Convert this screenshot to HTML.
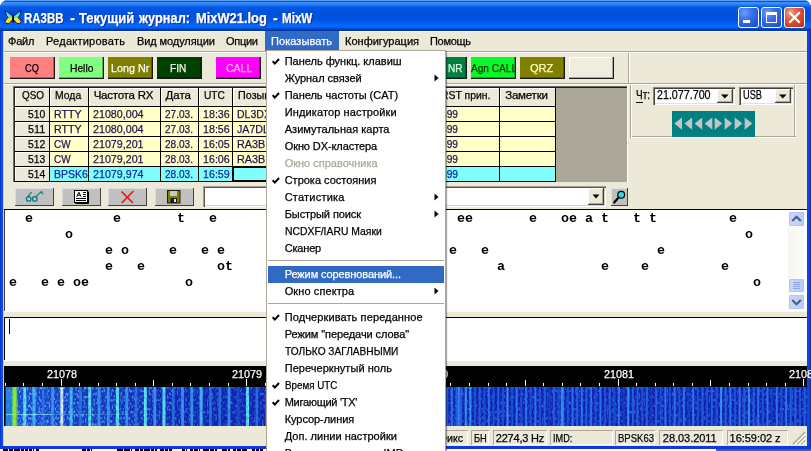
<!DOCTYPE html>
<html lang="ru"><head><meta charset="utf-8"><title>MixW</title>
<style>
html,body{margin:0;padding:0;}
body{width:811px;height:451px;overflow:hidden;background:#fff;position:relative;font-family:"Liberation Sans",sans-serif;font-size:11px;}
.t{position:absolute;white-space:pre;font-family:"Liberation Sans",sans-serif;-webkit-text-stroke:0.25px;}
.m{position:absolute;white-space:pre;font-family:"Liberation Mono",monospace;font-weight:700;font-size:13.333px;line-height:16px;color:#000;letter-spacing:0;}
.abs{position:absolute;}
</style></head><body><div id="w" style="position:absolute;left:0;top:0;width:811px;height:451px;overflow:hidden;will-change:transform;">

<div style="position:absolute;left:0px;top:0px;width:811px;height:449px;background:linear-gradient(to right,#0c34d4 0,#0c34d4 1px,#0a50e4 1px,#0a50e4 3px,#bcd4f8 3px,#bcd4f8 4px,#0a46e0 4px,#0a46e0 810px,#0828b8 810px);border-radius:8px 8px 0 0;"></div>
<div style="position:absolute;left:0px;top:446px;width:811px;height:3px;background:#0a3cdc;"></div>
<div style="position:absolute;left:0px;top:0px;width:811px;height:31px;border-radius:8px 8px 0 0;background:linear-gradient(to bottom,#5c9cf4 0.5px,#1050c8 1.5px,#3c8cf8 2.5px,#3a8af8 3.5px,#2a7ef4 4.5px,#1a70ee 5.5px,#0c64e8 6.5px,#045ce4 7.5px,#0056e2 8.5px,#0052de 12.5px,#0054e2 19.5px,#025ae8 21.5px,#0462f4 23.5px,#0868fc 25.5px,#0868fc 26.5px,#0560f4 27.5px,#0250dc 28.5px,#0040b8 29.5px,#0034a0 30.5px);"></div>
<div style="position:absolute;left:4px;top:31px;width:803px;height:415px;background:#ECE9D8;"></div>
<div style="position:absolute;left:4px;top:31px;width:803px;height:1px;background:#f6f7fb;"></div>
<div style="position:absolute;left:0px;top:449px;width:811px;height:2px;background:#fff;"></div>
<div style="position:absolute;left:716px;top:449px;width:95px;height:2px;background:#2a5fd0;"></div>
<div style="position:absolute;left:2.7px;top:449px;width:5px;height:2px;background:#000;"></div>
<div style="position:absolute;left:8.7px;top:449px;width:4px;height:2px;background:#000;"></div>
<div style="position:absolute;left:13.7px;top:449px;width:6px;height:2px;background:#000;"></div>
<div style="position:absolute;left:20.7px;top:449px;width:3px;height:2px;background:#000;"></div>
<div style="position:absolute;left:24.7px;top:449px;width:3px;height:2px;background:#000;"></div>
<div style="position:absolute;left:28.7px;top:449px;width:3px;height:2px;background:#000;"></div>
<div style="position:absolute;left:32.7px;top:449px;width:0.3px;height:2px;background:#000;"></div>
<div style="position:absolute;left:36px;top:449px;width:3px;height:2px;background:#000;"></div>
<div style="position:absolute;left:81.5px;top:449px;width:4px;height:2px;background:#000;"></div>
<div style="position:absolute;left:86.5px;top:449px;width:3px;height:2px;background:#000;"></div>
<div style="position:absolute;left:90.5px;top:449px;width:1.0px;height:2px;background:#000;"></div>
<div style="position:absolute;left:116.5px;top:449px;width:6px;height:2px;background:#000;"></div>
<div style="position:absolute;left:123.5px;top:449px;width:6px;height:2px;background:#000;"></div>
<div style="position:absolute;left:130.5px;top:449px;width:1.0px;height:2px;background:#000;"></div>
<div style="position:absolute;left:135px;top:449px;width:4px;height:2px;background:#000;"></div>
<div style="position:absolute;left:140px;top:449px;width:3px;height:2px;background:#000;"></div>
<div style="position:absolute;left:144px;top:449px;width:6px;height:2px;background:#000;"></div>
<div style="position:absolute;left:151px;top:449px;width:3px;height:2px;background:#000;"></div>
<div style="position:absolute;left:155px;top:449px;width:1.5px;height:2px;background:#000;"></div>
<div style="position:absolute;left:160px;top:449px;width:4px;height:2px;background:#000;"></div>
<div style="position:absolute;left:165px;top:449px;width:3px;height:2px;background:#000;"></div>
<div style="position:absolute;left:169px;top:449px;width:2.5px;height:2px;background:#000;"></div>
<div style="position:absolute;left:181.5px;top:449px;width:3px;height:2px;background:#000;"></div>
<div style="position:absolute;left:185.5px;top:449px;width:1.0px;height:2px;background:#000;"></div>
<div style="position:absolute;left:190px;top:449px;width:3px;height:2px;background:#000;"></div>
<div style="position:absolute;left:194px;top:449px;width:4px;height:2px;background:#000;"></div>
<div style="position:absolute;left:199px;top:449px;width:1px;height:2px;background:#000;"></div>
<div style="position:absolute;left:203px;top:449px;width:6px;height:2px;background:#000;"></div>
<div style="position:absolute;left:210px;top:449px;width:4px;height:2px;background:#000;"></div>
<div style="position:absolute;left:215px;top:449px;width:1.5px;height:2px;background:#000;"></div>
<div style="position:absolute;left:221.5px;top:449px;width:5px;height:2px;background:#000;"></div>
<div style="position:absolute;left:227.5px;top:449px;width:2.5px;height:2px;background:#000;"></div>
<div style="position:absolute;left:233px;top:449px;width:3px;height:2px;background:#000;"></div>
<div style="position:absolute;left:237px;top:449px;width:4px;height:2px;background:#000;"></div>
<div style="position:absolute;left:242px;top:449px;width:4.5px;height:2px;background:#000;"></div>
<div style="position:absolute;left:251.5px;top:449px;width:3px;height:2px;background:#000;"></div>
<div style="position:absolute;left:255.5px;top:449px;width:3px;height:2px;background:#000;"></div>
<div style="position:absolute;left:259.5px;top:449px;width:3px;height:2px;background:#000;"></div>
<svg class="abs" style="left:0;top:0" width="30" height="30" viewBox="0 0 30 30">
<defs><linearGradient id="bw" x1="0" y1="0" x2="0" y2="1"><stop offset="0" stop-color="#38e8f8"/><stop offset=".42" stop-color="#48f0f0"/><stop offset=".52" stop-color="#70d880"/><stop offset=".62" stop-color="#f8e828"/><stop offset="1" stop-color="#ffe018"/></linearGradient></defs>
<path d="M5.2 10.3 L12.6 16.2 L12.6 19.5 L9.2 23.6 L6.3 23.6 L5 21.2 L8 17.6 L6.4 15.2 Z" fill="url(#bw)" stroke="#0a1458" stroke-width="0.9" stroke-linejoin="round"/>
<path d="M21 10.3 L13.6 16.2 L13.6 19.5 L17 23.6 L19.9 23.6 L21.2 21.2 L18.2 17.6 L19.8 15.2 Z" fill="url(#bw)" stroke="#0a1458" stroke-width="0.9" stroke-linejoin="round"/>
<path d="M13.1 15.6 L13.1 22.4" stroke="#080808" stroke-width="1.7"/>
<path d="M13 15.5 L11.6 11.6 M13.3 15.5 L14.8 11.2" stroke="#10208a" stroke-width="0.9" stroke-dasharray="1 1"/>
</svg>
<div class="t " style="left:24.30px;top:9.15px;font-size:14px;line-height:18px;color:#fff;font-weight:700;transform:scaleX(0.8192);transform-origin:0 0;text-shadow:1px 1px 0 rgba(10,30,120,.8);">RA3BB</div>
<div class="t " style="left:70.30px;top:9.15px;font-size:14px;line-height:18px;color:#fff;font-weight:700;text-shadow:1px 1px 0 rgba(10,30,120,.8);">-</div>
<div class="t " style="left:79.20px;top:9.15px;font-size:14px;line-height:18px;color:#fff;font-weight:700;transform:scaleX(0.9287);transform-origin:0 0;text-shadow:1px 1px 0 rgba(10,30,120,.8);">Текущий</div>
<div class="t " style="left:139.40px;top:9.15px;font-size:14px;line-height:18px;color:#fff;font-weight:700;transform:scaleX(0.9133);transform-origin:0 0;text-shadow:1px 1px 0 rgba(10,30,120,.8);">журнал:</div>
<div class="t " style="left:196.10px;top:9.15px;font-size:14px;line-height:18px;color:#fff;font-weight:700;transform:scaleX(0.9197);transform-origin:0 0;text-shadow:1px 1px 0 rgba(10,30,120,.8);">MixW21.log</div>
<div class="t " style="left:273.00px;top:9.15px;font-size:14px;line-height:18px;color:#fff;font-weight:700;text-shadow:1px 1px 0 rgba(10,30,120,.8);">-</div>
<div class="t " style="left:281.70px;top:9.15px;font-size:14px;line-height:18px;color:#fff;font-weight:700;transform:scaleX(0.8291);transform-origin:0 0;text-shadow:1px 1px 0 rgba(10,30,120,.8);">MixW</div>
<div style="position:absolute;left:738px;top:7px;width:19px;height:19px;background:radial-gradient(circle at 30% 25%,#6f9dff 0%,#3a73ea 35%,#2458d8 75%,#1c48c0 100%);border:1px solid #fff;border-radius:3px;"></div>
<div style="position:absolute;left:761px;top:7px;width:19px;height:19px;background:radial-gradient(circle at 30% 25%,#6f9dff 0%,#3a73ea 35%,#2458d8 75%,#1c48c0 100%);border:1px solid #fff;border-radius:3px;"></div>
<div style="position:absolute;left:784px;top:7px;width:19px;height:19px;background:radial-gradient(circle at 30% 25%,#f0a088 0%,#e0603c 35%,#c8381c 80%,#b02810 100%);border:1px solid #fff;border-radius:3px;"></div>
<div style="position:absolute;left:743px;top:20px;width:7px;height:3px;background:#fff;"></div>
<div style="position:absolute;left:766px;top:12px;width:9px;height:9px;border:1px solid #fff;border-top:3px solid #fff;box-sizing:border-box;width:11px;height:11px;"></div>
<svg class="abs" style="left:788px;top:11px" width="13" height="13" viewBox="0 0 13 13"><path d="M2 2 L11 11 M11 2 L2 11" stroke="#fff" stroke-width="2.2" stroke-linecap="square"/></svg>
<div style="position:absolute;left:265px;top:31px;width:74px;height:20px;background:#316ac5;"></div>
<div class="t " style="left:8.00px;top:33.59px;font-size:11px;line-height:14px;color:#000;letter-spacing:-0.182px;">Файл</div>
<div class="t " style="left:46.00px;top:33.59px;font-size:11px;line-height:14px;color:#000;letter-spacing:0.247px;">Редактировать</div>
<div class="t " style="left:137.00px;top:33.59px;font-size:11px;line-height:14px;color:#000;letter-spacing:-0.089px;">Вид модуляции</div>
<div class="t " style="left:226.00px;top:33.59px;font-size:11px;line-height:14px;color:#000;letter-spacing:-0.273px;">Опции</div>
<div class="t " style="left:271.00px;top:33.59px;font-size:11px;line-height:14px;color:#fff;letter-spacing:0.066px;">Показывать</div>
<div class="t " style="left:345.00px;top:33.59px;font-size:11px;line-height:14px;color:#000;letter-spacing:0.016px;">Конфигурация</div>
<div class="t " style="left:430.00px;top:33.59px;font-size:11px;line-height:14px;color:#000;letter-spacing:-0.300px;">Помощь</div>
<div style="position:absolute;left:4px;top:51px;width:803px;height:1px;background:#aca899;"></div>
<div style="position:absolute;left:4px;top:52px;width:803px;height:1px;background:#fff;"></div>
<div style="position:absolute;left:10px;top:57px;width:45px;height:22px;background:#ff8080;box-shadow:inset -1px -1px 0 #181818, inset -2px -2px 0 rgba(0,0,0,.30);overflow:hidden;"></div>
<div style="position:absolute;left:10px;top:57px;width:44px;height:21px;overflow:hidden;">
<div class="t " style="left:14.70px;top:4.02px;font-size:11.5px;line-height:14px;color:#000;transform:scaleX(0.8000);transform-origin:0 0;">CQ</div>
</div>
<div style="position:absolute;left:59px;top:57px;width:45px;height:22px;background:#80ff80;box-shadow:inset -1px -1px 0 #181818, inset -2px -2px 0 rgba(0,0,0,.30);overflow:hidden;"></div>
<div style="position:absolute;left:59px;top:57px;width:44px;height:21px;overflow:hidden;">
<div class="t " style="left:10.80px;top:4.02px;font-size:11.5px;line-height:14px;color:#000;transform:scaleX(0.8925);transform-origin:0 0;">Hello</div>
</div>
<div style="position:absolute;left:108px;top:57px;width:45px;height:22px;background:#808000;box-shadow:inset -1px -1px 0 #181818, inset -2px -2px 0 rgba(0,0,0,.30);overflow:hidden;"></div>
<div style="position:absolute;left:108px;top:57px;width:44px;height:21px;overflow:hidden;">
<div class="t " style="left:3.00px;top:4.02px;font-size:11.5px;line-height:14px;color:#fff;transform:scaleX(0.9342);transform-origin:0 0;">Long Nr</div>
</div>
<div style="position:absolute;left:157px;top:57px;width:45px;height:22px;background:#004000;box-shadow:inset -1px -1px 0 #181818, inset -2px -2px 0 rgba(0,0,0,.30);overflow:hidden;"></div>
<div style="position:absolute;left:157px;top:57px;width:44px;height:21px;overflow:hidden;">
<div class="t " style="left:13.30px;top:4.02px;font-size:11.5px;line-height:14px;color:#e8ffe8;transform:scaleX(0.8742);transform-origin:0 0;">FIN</div>
</div>
<div style="position:absolute;left:216px;top:57px;width:45px;height:22px;background:#ff00ff;box-shadow:inset -1px -1px 0 #181818, inset -2px -2px 0 rgba(0,0,0,.30);overflow:hidden;"></div>
<div style="position:absolute;left:216px;top:57px;width:44px;height:21px;overflow:hidden;">
<div class="t " style="left:9.80px;top:4.02px;font-size:11.5px;line-height:14px;color:#ffb8e0;transform:scaleX(0.9143);transform-origin:0 0;">CALL</div>
</div>
<div style="position:absolute;left:267px;top:57px;width:45px;height:22px;background:#ff00ff;box-shadow:inset -1px -1px 0 #181818, inset -2px -2px 0 rgba(0,0,0,.30);overflow:hidden;"></div>
<div style="position:absolute;left:314px;top:57px;width:45px;height:22px;background:#008040;box-shadow:inset -1px -1px 0 #181818, inset -2px -2px 0 rgba(0,0,0,.30);overflow:hidden;"></div>
<div style="position:absolute;left:363px;top:57px;width:45px;height:22px;background:#008040;box-shadow:inset -1px -1px 0 #181818, inset -2px -2px 0 rgba(0,0,0,.30);overflow:hidden;"></div>
<div style="position:absolute;left:422px;top:57px;width:45px;height:22px;background:#008040;box-shadow:inset -1px -1px 0 #181818, inset -2px -2px 0 rgba(0,0,0,.30);overflow:hidden;"></div>
<div style="position:absolute;left:422px;top:57px;width:44px;height:21px;overflow:hidden;">
<div class="t " style="left:26.20px;top:4.02px;font-size:11.5px;line-height:14px;color:#e0ffe0;transform:scaleX(0.8722);transform-origin:0 0;">NR</div>
</div>
<div style="position:absolute;left:471px;top:57px;width:45px;height:22px;background:#08f828;box-shadow:inset -1px -1px 0 #181818, inset -2px -2px 0 rgba(0,0,0,.30);overflow:hidden;"></div>
<div style="position:absolute;left:471px;top:57px;width:44px;height:21px;overflow:hidden;">
<div class="t " style="left:0.30px;top:4.02px;font-size:11.5px;line-height:14px;color:#003800;transform:scaleX(0.8778);transform-origin:0 0;">Agn CALL</div>
</div>
<div style="position:absolute;left:520px;top:57px;width:45px;height:22px;background:#808000;box-shadow:inset -1px -1px 0 #181818, inset -2px -2px 0 rgba(0,0,0,.30);overflow:hidden;"></div>
<div style="position:absolute;left:520px;top:57px;width:44px;height:21px;overflow:hidden;">
<div class="t " style="left:10.20px;top:4.02px;font-size:11.5px;line-height:14px;color:#ffffc0;transform:scaleX(0.9637);transform-origin:0 0;">QRZ</div>
</div>
<div style="position:absolute;left:569px;top:57px;width:45px;height:22px;background:#f0ede0;box-shadow:inset -1px -1px 0 #181818, inset -2px -2px 0 rgba(0,0,0,.30), inset 1px 1px 0 #fff;overflow:hidden;"></div>
<div style="position:absolute;left:628px;top:53px;width:1px;height:30px;background:#aca899;"></div>
<div style="position:absolute;left:629px;top:53px;width:1px;height:30px;background:#fff;"></div>
<div style="position:absolute;left:4px;top:83px;width:803px;height:1px;background:#aca899;"></div>
<div style="position:absolute;left:4px;top:84px;width:803px;height:1px;background:#fff;"></div>
<div style="position:absolute;left:13px;top:86px;width:614px;height:96px;background:#aca899;box-shadow:inset 1px 1px 0 #716f64, inset 2px 2px 0 #202020;"></div>
<div style="position:absolute;left:627px;top:86px;width:1px;height:96px;background:#fff;"></div>
<div style="position:absolute;left:15px;top:88px;width:541px;height:94px;background:#000;"></div>
<div style="position:absolute;left:15px;top:88px;width:34px;height:18px;background:#ECE9D8;box-shadow:inset 1px 1px 0 #fff;"></div>
<div class="t " style="left:22.20px;top:88.02px;font-size:11.5px;line-height:14px;color:#000;transform:scaleX(0.8612);transform-origin:0 0;">QSO</div>
<div style="position:absolute;left:50px;top:88px;width:38px;height:18px;background:#ECE9D8;box-shadow:inset 1px 1px 0 #fff;"></div>
<div class="t " style="left:54.70px;top:88.02px;font-size:11.5px;line-height:14px;color:#000;transform:scaleX(0.9054);transform-origin:0 0;">Мода</div>
<div style="position:absolute;left:89px;top:88px;width:71px;height:18px;background:#ECE9D8;box-shadow:inset 1px 1px 0 #fff;"></div>
<div class="t " style="left:93.70px;top:88.02px;font-size:11.5px;line-height:14px;color:#000;letter-spacing:-0.233px;">Частота RX</div>
<div style="position:absolute;left:161px;top:88px;width:37px;height:18px;background:#ECE9D8;box-shadow:inset 1px 1px 0 #fff;"></div>
<div class="t " style="left:165.60px;top:88.02px;font-size:11.5px;line-height:14px;color:#000;letter-spacing:-0.051px;">Дата</div>
<div style="position:absolute;left:199px;top:88px;width:33px;height:18px;background:#ECE9D8;box-shadow:inset 1px 1px 0 #fff;"></div>
<div class="t " style="left:203.60px;top:88.02px;font-size:11.5px;line-height:14px;color:#000;transform:scaleX(0.8877);transform-origin:0 0;">UTC</div>
<div style="position:absolute;left:233px;top:88px;width:67px;height:18px;background:#ECE9D8;box-shadow:inset 1px 1px 0 #fff;"></div>
<div class="t " style="left:237.60px;top:88.02px;font-size:11.5px;line-height:14px;color:#000;transform:scaleX(0.9376);transform-origin:0 0;">Позывной</div>
<div style="position:absolute;left:301px;top:88px;width:59px;height:18px;background:#ECE9D8;box-shadow:inset 1px 1px 0 #fff;"></div>
<div class="t " style="left:315.00px;top:88.02px;font-size:11.5px;line-height:14px;color:#000;letter-spacing:-0.203px;">Имя</div>
<div style="position:absolute;left:361px;top:88px;width:75px;height:18px;background:#ECE9D8;box-shadow:inset 1px 1px 0 #fff;"></div>
<div class="t " style="left:375.00px;top:88.02px;font-size:11.5px;line-height:14px;color:#000;transform:scaleX(0.9335);transform-origin:0 0;">RST пер.</div>
<div style="position:absolute;left:437px;top:88px;width:62px;height:18px;background:#ECE9D8;box-shadow:inset 1px 1px 0 #fff;"></div>
<div class="t " style="left:441.00px;top:88.02px;font-size:11.5px;line-height:14px;color:#000;transform:scaleX(0.9051);transform-origin:0 0;">RST прин.</div>
<div style="position:absolute;left:500px;top:88px;width:55px;height:18px;background:#ECE9D8;box-shadow:inset 1px 1px 0 #fff;"></div>
<div class="t " style="left:505.20px;top:88.02px;font-size:11.5px;line-height:14px;color:#000;letter-spacing:-0.214px;">Заметки</div>
<div style="position:absolute;left:15px;top:107px;width:34px;height:14px;background:#ECE9D8;overflow:hidden;box-shadow:inset 1px 1px 0 #fff;">
<div class="t " style="left:12.70px;top:0.32px;font-size:11.5px;line-height:14px;color:#000;transform:scaleX(0.9024);transform-origin:0 0;">510</div>
</div>
<div style="position:absolute;left:50px;top:107px;width:38px;height:14px;background:#ffffc8;overflow:hidden;">
<div class="t " style="left:3.70px;top:0.32px;font-size:11.5px;line-height:14px;color:#24104f;transform:scaleX(0.9248);transform-origin:0 0;">RTTY</div>
</div>
<div style="position:absolute;left:89px;top:107px;width:71px;height:14px;background:#ffffc8;overflow:hidden;">
<div class="t " style="left:3.70px;top:0.32px;font-size:11.5px;line-height:14px;color:#24104f;transform:scaleX(0.9298);transform-origin:0 0;">21080,004</div>
</div>
<div style="position:absolute;left:161px;top:107px;width:37px;height:14px;background:#ffffc8;overflow:hidden;">
<div class="t " style="left:3.70px;top:0.32px;font-size:11.5px;line-height:14px;color:#24104f;transform:scaleX(0.8767);transform-origin:0 0;">27.03.</div>
</div>
<div style="position:absolute;left:199px;top:107px;width:33px;height:14px;background:#ffffc8;overflow:hidden;">
<div class="t " style="left:3.70px;top:0.32px;font-size:11.5px;line-height:14px;color:#24104f;transform:scaleX(0.9287);transform-origin:0 0;">18:36</div>
</div>
<div style="position:absolute;left:233px;top:107px;width:67px;height:14px;background:#ffffc8;overflow:hidden;">
<div class="t " style="left:3.70px;top:0.32px;font-size:11.5px;line-height:14px;color:#24104f;transform:scaleX(0.9162);transform-origin:0 0;">DL3DXX</div>
</div>
<div style="position:absolute;left:301px;top:107px;width:59px;height:14px;background:#ffffc8;overflow:hidden;">
</div>
<div style="position:absolute;left:361px;top:107px;width:75px;height:14px;background:#ffffc8;overflow:hidden;">
<div class="t " style="left:3.70px;top:0.32px;font-size:11.5px;line-height:14px;color:#24104f;transform:scaleX(0.8867);transform-origin:0 0;">599</div>
</div>
<div style="position:absolute;left:437px;top:107px;width:62px;height:14px;background:#ffffc8;overflow:hidden;">
<div class="t " style="left:3.70px;top:0.32px;font-size:11.5px;line-height:14px;color:#24104f;transform:scaleX(0.8867);transform-origin:0 0;">599</div>
</div>
<div style="position:absolute;left:500px;top:107px;width:55px;height:14px;background:#ffffc8;overflow:hidden;">
</div>
<div style="position:absolute;left:15px;top:122px;width:34px;height:14px;background:#ECE9D8;overflow:hidden;box-shadow:inset 1px 1px 0 #fff;">
<div class="t " style="left:12.70px;top:0.32px;font-size:11.5px;line-height:14px;color:#000;transform:scaleX(0.9447);transform-origin:0 0;">511</div>
</div>
<div style="position:absolute;left:50px;top:122px;width:38px;height:14px;background:#ffffc8;overflow:hidden;">
<div class="t " style="left:3.70px;top:0.32px;font-size:11.5px;line-height:14px;color:#24104f;transform:scaleX(0.9248);transform-origin:0 0;">RTTY</div>
</div>
<div style="position:absolute;left:89px;top:122px;width:71px;height:14px;background:#ffffc8;overflow:hidden;">
<div class="t " style="left:3.70px;top:0.32px;font-size:11.5px;line-height:14px;color:#24104f;transform:scaleX(0.9298);transform-origin:0 0;">21080,004</div>
</div>
<div style="position:absolute;left:161px;top:122px;width:37px;height:14px;background:#ffffc8;overflow:hidden;">
<div class="t " style="left:3.70px;top:0.32px;font-size:11.5px;line-height:14px;color:#24104f;transform:scaleX(0.8767);transform-origin:0 0;">27.03.</div>
</div>
<div style="position:absolute;left:199px;top:122px;width:33px;height:14px;background:#ffffc8;overflow:hidden;">
<div class="t " style="left:3.70px;top:0.32px;font-size:11.5px;line-height:14px;color:#24104f;transform:scaleX(0.9287);transform-origin:0 0;">18:56</div>
</div>
<div style="position:absolute;left:233px;top:122px;width:67px;height:14px;background:#ffffc8;overflow:hidden;">
<div class="t " style="left:3.70px;top:0.32px;font-size:11.5px;line-height:14px;color:#24104f;transform:scaleX(0.9244);transform-origin:0 0;">JA7DLE</div>
</div>
<div style="position:absolute;left:301px;top:122px;width:59px;height:14px;background:#ffffc8;overflow:hidden;">
</div>
<div style="position:absolute;left:361px;top:122px;width:75px;height:14px;background:#ffffc8;overflow:hidden;">
<div class="t " style="left:3.70px;top:0.32px;font-size:11.5px;line-height:14px;color:#24104f;transform:scaleX(0.8867);transform-origin:0 0;">599</div>
</div>
<div style="position:absolute;left:437px;top:122px;width:62px;height:14px;background:#ffffc8;overflow:hidden;">
<div class="t " style="left:3.70px;top:0.32px;font-size:11.5px;line-height:14px;color:#24104f;transform:scaleX(0.8867);transform-origin:0 0;">599</div>
</div>
<div style="position:absolute;left:500px;top:122px;width:55px;height:14px;background:#ffffc8;overflow:hidden;">
</div>
<div style="position:absolute;left:15px;top:137px;width:34px;height:14px;background:#ECE9D8;overflow:hidden;box-shadow:inset 1px 1px 0 #fff;">
<div class="t " style="left:12.70px;top:0.32px;font-size:11.5px;line-height:14px;color:#000;transform:scaleX(0.9024);transform-origin:0 0;">512</div>
</div>
<div style="position:absolute;left:50px;top:137px;width:38px;height:14px;background:#ffffc8;overflow:hidden;">
<div class="t " style="left:3.70px;top:0.32px;font-size:11.5px;line-height:14px;color:#24104f;transform:scaleX(0.8606);transform-origin:0 0;">CW</div>
</div>
<div style="position:absolute;left:89px;top:137px;width:71px;height:14px;background:#ffffc8;overflow:hidden;">
<div class="t " style="left:3.70px;top:0.32px;font-size:11.5px;line-height:14px;color:#24104f;transform:scaleX(0.9298);transform-origin:0 0;">21079,201</div>
</div>
<div style="position:absolute;left:161px;top:137px;width:37px;height:14px;background:#ffffc8;overflow:hidden;">
<div class="t " style="left:3.70px;top:0.32px;font-size:11.5px;line-height:14px;color:#24104f;transform:scaleX(0.8767);transform-origin:0 0;">28.03.</div>
</div>
<div style="position:absolute;left:199px;top:137px;width:33px;height:14px;background:#ffffc8;overflow:hidden;">
<div class="t " style="left:3.70px;top:0.32px;font-size:11.5px;line-height:14px;color:#24104f;transform:scaleX(0.9287);transform-origin:0 0;">16:05</div>
</div>
<div style="position:absolute;left:233px;top:137px;width:67px;height:14px;background:#ffffc8;overflow:hidden;">
<div class="t " style="left:3.70px;top:0.32px;font-size:11.5px;line-height:14px;color:#24104f;transform:scaleX(0.9412);transform-origin:0 0;">RA3BB</div>
</div>
<div style="position:absolute;left:301px;top:137px;width:59px;height:14px;background:#ffffc8;overflow:hidden;">
</div>
<div style="position:absolute;left:361px;top:137px;width:75px;height:14px;background:#ffffc8;overflow:hidden;">
<div class="t " style="left:3.70px;top:0.32px;font-size:11.5px;line-height:14px;color:#24104f;transform:scaleX(0.8867);transform-origin:0 0;">599</div>
</div>
<div style="position:absolute;left:437px;top:137px;width:62px;height:14px;background:#ffffc8;overflow:hidden;">
<div class="t " style="left:3.70px;top:0.32px;font-size:11.5px;line-height:14px;color:#24104f;transform:scaleX(0.8867);transform-origin:0 0;">599</div>
</div>
<div style="position:absolute;left:500px;top:137px;width:55px;height:14px;background:#ffffc8;overflow:hidden;">
</div>
<div style="position:absolute;left:15px;top:152px;width:34px;height:14px;background:#ECE9D8;overflow:hidden;box-shadow:inset 1px 1px 0 #fff;">
<div class="t " style="left:12.70px;top:0.32px;font-size:11.5px;line-height:14px;color:#000;transform:scaleX(0.9024);transform-origin:0 0;">513</div>
</div>
<div style="position:absolute;left:50px;top:152px;width:38px;height:14px;background:#ffffc8;overflow:hidden;">
<div class="t " style="left:3.70px;top:0.32px;font-size:11.5px;line-height:14px;color:#24104f;transform:scaleX(0.8606);transform-origin:0 0;">CW</div>
</div>
<div style="position:absolute;left:89px;top:152px;width:71px;height:14px;background:#ffffc8;overflow:hidden;">
<div class="t " style="left:3.70px;top:0.32px;font-size:11.5px;line-height:14px;color:#24104f;transform:scaleX(0.9298);transform-origin:0 0;">21079,201</div>
</div>
<div style="position:absolute;left:161px;top:152px;width:37px;height:14px;background:#ffffc8;overflow:hidden;">
<div class="t " style="left:3.70px;top:0.32px;font-size:11.5px;line-height:14px;color:#24104f;transform:scaleX(0.8767);transform-origin:0 0;">28.03.</div>
</div>
<div style="position:absolute;left:199px;top:152px;width:33px;height:14px;background:#ffffc8;overflow:hidden;">
<div class="t " style="left:3.70px;top:0.32px;font-size:11.5px;line-height:14px;color:#24104f;transform:scaleX(0.9287);transform-origin:0 0;">16:06</div>
</div>
<div style="position:absolute;left:233px;top:152px;width:67px;height:14px;background:#ffffc8;overflow:hidden;">
<div class="t " style="left:3.70px;top:0.32px;font-size:11.5px;line-height:14px;color:#24104f;transform:scaleX(0.9412);transform-origin:0 0;">RA3BB</div>
</div>
<div style="position:absolute;left:301px;top:152px;width:59px;height:14px;background:#ffffc8;overflow:hidden;">
</div>
<div style="position:absolute;left:361px;top:152px;width:75px;height:14px;background:#ffffc8;overflow:hidden;">
<div class="t " style="left:3.70px;top:0.32px;font-size:11.5px;line-height:14px;color:#24104f;transform:scaleX(0.8867);transform-origin:0 0;">599</div>
</div>
<div style="position:absolute;left:437px;top:152px;width:62px;height:14px;background:#ffffc8;overflow:hidden;">
<div class="t " style="left:3.70px;top:0.32px;font-size:11.5px;line-height:14px;color:#24104f;transform:scaleX(0.8867);transform-origin:0 0;">599</div>
</div>
<div style="position:absolute;left:500px;top:152px;width:55px;height:14px;background:#ffffc8;overflow:hidden;">
</div>
<div style="position:absolute;left:15px;top:167px;width:34px;height:14px;background:#ECE9D8;overflow:hidden;box-shadow:inset 1px 1px 0 #fff;">
<div class="t " style="left:12.70px;top:0.32px;font-size:11.5px;line-height:14px;color:#000;transform:scaleX(0.9024);transform-origin:0 0;">514</div>
</div>
<div style="position:absolute;left:50px;top:167px;width:38px;height:14px;background:#80ffff;overflow:hidden;">
<div class="t " style="left:3.70px;top:0.32px;font-size:11.5px;line-height:14px;color:#102a98;transform:scaleX(0.9087);transform-origin:0 0;">BPSK63</div>
</div>
<div style="position:absolute;left:89px;top:167px;width:71px;height:14px;background:#80ffff;overflow:hidden;">
<div class="t " style="left:3.70px;top:0.32px;font-size:11.5px;line-height:14px;color:#102a98;transform:scaleX(0.9298);transform-origin:0 0;">21079,974</div>
</div>
<div style="position:absolute;left:161px;top:167px;width:37px;height:14px;background:#80ffff;overflow:hidden;">
<div class="t " style="left:3.70px;top:0.32px;font-size:11.5px;line-height:14px;color:#102a98;transform:scaleX(0.8767);transform-origin:0 0;">28.03.</div>
</div>
<div style="position:absolute;left:199px;top:167px;width:33px;height:14px;background:#80ffff;overflow:hidden;">
<div class="t " style="left:3.70px;top:0.32px;font-size:11.5px;line-height:14px;color:#102a98;transform:scaleX(0.9287);transform-origin:0 0;">16:59</div>
</div>
<div style="position:absolute;left:233px;top:167px;width:67px;height:14px;background:#80ffff;overflow:hidden;">
</div>
<div style="position:absolute;left:301px;top:167px;width:59px;height:14px;background:#80ffff;overflow:hidden;">
</div>
<div style="position:absolute;left:361px;top:167px;width:75px;height:14px;background:#80ffff;overflow:hidden;">
<div class="t " style="left:3.70px;top:0.32px;font-size:11.5px;line-height:14px;color:#102a98;transform:scaleX(0.8867);transform-origin:0 0;">599</div>
</div>
<div style="position:absolute;left:437px;top:167px;width:62px;height:14px;background:#80ffff;overflow:hidden;">
<div class="t " style="left:3.70px;top:0.32px;font-size:11.5px;line-height:14px;color:#102a98;transform:scaleX(0.8867);transform-origin:0 0;">599</div>
</div>
<div style="position:absolute;left:500px;top:167px;width:55px;height:14px;background:#80ffff;overflow:hidden;">
</div>
<div style="position:absolute;left:232px;top:166px;width:69px;height:16px;border:2px solid #000;box-sizing:border-box;"></div>
<div style="position:absolute;left:15px;top:188px;width:39px;height:18px;background:#c0c0c0;box-shadow:inset -1px -1px 0 #404040, inset 1px 1px 0 #dcdcdc;"></div>
<div style="position:absolute;left:62px;top:188px;width:39px;height:18px;background:#c0c0c0;box-shadow:inset -1px -1px 0 #404040, inset 1px 1px 0 #dcdcdc;"></div>
<div style="position:absolute;left:108px;top:188px;width:39px;height:18px;background:#c0c0c0;box-shadow:inset -1px -1px 0 #404040, inset 1px 1px 0 #dcdcdc;"></div>
<div style="position:absolute;left:155px;top:188px;width:39px;height:18px;background:#c0c0c0;box-shadow:inset -1px -1px 0 #404040, inset 1px 1px 0 #dcdcdc;"></div>
<svg class="abs" style="left:20px;top:188px" width="30" height="18" viewBox="20 188 30 18">
<circle cx="28.7" cy="198.9" r="2.3" fill="none" stroke="#007878" stroke-width="1.2"/>
<circle cx="34.8" cy="198.9" r="2.3" fill="none" stroke="#007878" stroke-width="1.2"/>
<path d="M27.6 196.6 L31.6 192.2 M35.8 196.6 L41.4 191.6 L43 194.2" fill="none" stroke="#007878" stroke-width="1.1"/>
</svg>
<svg class="abs" style="left:73px;top:189px" width="17" height="16" viewBox="0 0 17 16">
<rect x="1.5" y="1.5" width="13" height="12" fill="#fff" stroke="#000"/>
<path d="M2.5 14.5 H15.5 V2.5" stroke="#000" stroke-width="1" fill="none"/>
<path d="M3 9.5 H13 M3 11.5 H13 M10 3.5 H13 M10 5.5 H13 M10 7.5 H13" stroke="#000" stroke-width="1" fill="none"/>
<path d="M3.6 7.8 L5.9 3.2 L8.2 7.8 M4.6 6.2 H7.2" stroke="#000" stroke-width="1" fill="none"/>
</svg>
<svg class="abs" style="left:120px;top:190px" width="15" height="14" viewBox="0 0 15 14"><path d="M2 2 L12.5 12.5 M13 1.5 L2.2 12.5" stroke="#e81818" stroke-width="1.7" stroke-linecap="round"/></svg>
<svg class="abs" style="left:167px;top:190px" width="14" height="14" viewBox="0 0 14 14">
<rect x="0.5" y="0.5" width="12.5" height="12.5" fill="#808000" stroke="#202000"/>
<rect x="3" y="1" width="7" height="5" fill="#c8c8c8"/>
<rect x="3.5" y="8" width="6.5" height="5" fill="#181818"/><rect x="7" y="9" width="2" height="3" fill="#e8e8e8"/>
</svg>
<div style="position:absolute;left:203px;top:186px;width:403px;height:21px;background:#fff;box-shadow:inset 1px 1px 0 #a5a294, inset 2px 2px 0 #5a584e, inset -1px -1px 0 #fff, inset -2px -2px 0 #d4d0c8;"></div>
<div style="position:absolute;left:588px;top:188px;width:16px;height:17px;background:#ECE9D8;box-shadow:inset -1px -1px 0 #404040, inset 1px 1px 0 #fff, inset -2px -2px 0 #aca899;"></div>
<svg class="abs" style="left:592px;top:194px" width="8" height="5"><path d="M0.5 0.5 H7.5 L4 4.5 Z" fill="#000"/></svg>
<div style="position:absolute;left:611px;top:188px;width:17px;height:18px;background:#c0c0c0;box-shadow:inset -1px -1px 0 #404040, inset 1px 1px 0 #e0e0e0;"></div>
<svg class="abs" style="left:611px;top:188px" width="17" height="18" viewBox="611 188 17 18"><circle cx="621.2" cy="194.8" r="3.4" fill="#30dce4" stroke="#000" stroke-width="1.2"/><path d="M618.6 197.6 L614.2 202.6" stroke="#000" stroke-width="2.2" stroke-linecap="round"/></svg>
<div style="position:absolute;left:630px;top:85px;width:166px;height:53px;box-shadow:inset 1px 0 0 #aca899, inset 2px 0 0 #fff, inset 0 -1px 0 #fff, inset 0 -2px 0 #aca899, inset -1px 0 0 #fff, inset -2px 0 0 #aca899;"></div>
<div class="t " style="left:635.70px;top:88.34px;font-size:12px;line-height:15px;color:#000;transform:scaleX(0.8319);transform-origin:0 0;">Чт:</div>
<div style="position:absolute;left:636px;top:102px;width:7px;height:1px;background:#000;"></div>
<div style="position:absolute;left:653px;top:87px;width:82px;height:18px;background:#fff;box-shadow:inset 1px 1px 0 #8a8878, inset 2px 2px 0 #404040, inset -1px -1px 0 #fff, inset -2px -2px 0 #e4e0d4;"></div>
<div style="position:absolute;left:717px;top:89px;width:16px;height:14px;background:#ECE9D8;box-shadow:inset -1px -1px 0 #404040, inset 1px 1px 0 #fff, inset -2px -2px 0 #aca899;"></div>
<svg class="abs" style="left:721px;top:94px" width="8" height="5"><path d="M0 0.5 H7.6 L3.8 4.5 Z" fill="#000"/></svg>
<div class="t " style="left:656.60px;top:88.34px;font-size:12px;line-height:15px;color:#000;transform:scaleX(0.8912);transform-origin:0 0;">21.077.700</div>
<div style="position:absolute;left:739px;top:87px;width:54px;height:18px;background:#fff;box-shadow:inset 1px 1px 0 #8a8878, inset 2px 2px 0 #404040, inset -1px -1px 0 #fff, inset -2px -2px 0 #e4e0d4;"></div>
<div style="position:absolute;left:775px;top:89px;width:16px;height:14px;background:#ECE9D8;box-shadow:inset -1px -1px 0 #404040, inset 1px 1px 0 #fff, inset -2px -2px 0 #aca899;"></div>
<svg class="abs" style="left:779px;top:94px" width="8" height="5"><path d="M0 0.5 H7.6 L3.8 4.5 Z" fill="#000"/></svg>
<div class="t " style="left:742.60px;top:88.34px;font-size:12px;line-height:15px;color:#000;transform:scaleX(0.7701);transform-origin:0 0;">USB</div>
<div style="position:absolute;left:672px;top:111px;width:83px;height:26px;background:#008080;"></div>
<svg class="abs" style="left:0;top:0" width="811" height="140"><path d="M682.0 117.4 L674.4 123.6 L682.0 129.8 Z" fill="#c4c4c4"/><path d="M692.1 117.4 L684.5 123.6 L692.1 129.8 Z" fill="#c4c4c4"/><path d="M702.2 117.4 L694.6 123.6 L702.2 129.8 Z" fill="#c4c4c4"/><path d="M712.3 117.4 L704.7 123.6 L712.3 129.8 Z" fill="#c4c4c4"/><path d="M714.7 117.4 L722.3 123.6 L714.7 129.8 Z" fill="#c4c4c4"/><path d="M724.7 117.4 L732.3 123.6 L724.7 129.8 Z" fill="#c4c4c4"/><path d="M734.7 117.4 L742.3 123.6 L734.7 129.8 Z" fill="#c4c4c4"/><path d="M744.7 117.4 L752.3 123.6 L744.7 129.8 Z" fill="#c4c4c4"/></svg>
<div style="position:absolute;left:4px;top:209px;width:803px;height:102px;background:#fff;box-shadow:inset 0 1px 0 #000, inset 1px 0 0 #404040;"></div>
<div class="m" style="left:25px;top:211px">e</div>
<div class="m" style="left:113px;top:211px">e</div>
<div class="m" style="left:177px;top:211px">t</div>
<div class="m" style="left:209px;top:211px">e</div>
<div class="m" style="left:457px;top:211px">ee</div>
<div class="m" style="left:529px;top:211px">e</div>
<div class="m" style="left:561px;top:211px">oe</div>
<div class="m" style="left:585px;top:211px">a</div>
<div class="m" style="left:601px;top:211px">t</div>
<div class="m" style="left:633px;top:211px">t</div>
<div class="m" style="left:649px;top:211px">t</div>
<div class="m" style="left:729px;top:211px">e</div>
<div class="m" style="left:65px;top:227px">o</div>
<div class="m" style="left:745px;top:227px">o</div>
<div class="m" style="left:105px;top:243px">e</div>
<div class="m" style="left:121px;top:243px">o</div>
<div class="m" style="left:169px;top:243px">e</div>
<div class="m" style="left:201px;top:243px">e</div>
<div class="m" style="left:217px;top:243px">e</div>
<div class="m" style="left:449px;top:243px">e</div>
<div class="m" style="left:481px;top:243px">e</div>
<div class="m" style="left:657px;top:243px">e</div>
<div class="m" style="left:105px;top:259px">e</div>
<div class="m" style="left:137px;top:259px">e</div>
<div class="m" style="left:217px;top:259px">ot</div>
<div class="m" style="left:497px;top:259px">a</div>
<div class="m" style="left:601px;top:259px">e</div>
<div class="m" style="left:641px;top:259px">e</div>
<div class="m" style="left:721px;top:259px">e</div>
<div class="m" style="left:9px;top:275px">e</div>
<div class="m" style="left:41px;top:275px">e</div>
<div class="m" style="left:57px;top:275px">e</div>
<div class="m" style="left:73px;top:275px">oe</div>
<div class="m" style="left:185px;top:275px">o</div>
<div class="m" style="left:753px;top:275px">o</div>
<div style="position:absolute;left:788px;top:211px;width:17px;height:99px;background:linear-gradient(to right,#f6f5f0,#fdfdfb);"></div>
<div style="position:absolute;left:788px;top:211px;width:17px;height:16px;background:linear-gradient(to right,#cad8fd,#b9cbf8);border:1px solid #fff;box-sizing:border-box;border-radius:2px;box-shadow:inset 0 0 0 1px #b4c4f2;"></div>
<svg class="abs" style="left:788px;top:211px" width="17" height="17"><path d="M4.2 10 L8.5 5.7 L12.8 10" fill="none" stroke="#4d6185" stroke-width="2.2"/></svg>
<div style="position:absolute;left:788px;top:294px;width:17px;height:16px;background:linear-gradient(to right,#cad8fd,#b9cbf8);border:1px solid #fff;box-sizing:border-box;border-radius:2px;box-shadow:inset 0 0 0 1px #b4c4f2;"></div>
<svg class="abs" style="left:788px;top:294px" width="17" height="17"><path d="M4.2 6 L8.5 10.3 L12.8 6" fill="none" stroke="#4d6185" stroke-width="2.2"/></svg>
<div style="position:absolute;left:788px;top:278px;width:17px;height:15px;background:linear-gradient(to right,#cad8fd,#b9cbf8);border:1px solid #fff;box-sizing:border-box;border-radius:2px;box-shadow:inset 0 0 0 1px #b4c4f2;"></div>
<svg class="abs" style="left:788px;top:277px" width="17" height="17"><path d="M5 5.5 H12 M5 7.5 H12 M5 9.5 H12 M5 11.5 H12" stroke="#8ea4e0" stroke-width="1"/></svg>
<div style="position:absolute;left:4px;top:311px;width:803px;height:1px;background:#fbfaf6;"></div>
<div style="position:absolute;left:4px;top:360px;width:803px;height:1px;background:#fff;"></div>
<div style="position:absolute;left:4px;top:317px;width:803px;height:43px;background:#fff;box-shadow:inset 1px 1px 0 #000;"></div>
<div style="position:absolute;left:9px;top:319px;width:1px;height:15px;background:#000;"></div>
<div style="position:absolute;left:4px;top:366px;width:803px;height:21px;background:#000;"></div>
<svg class="abs" style="left:0;top:0" width="811" height="390"><rect x="5" y="383" width="1" height="3" fill="#fff"/><rect x="23" y="383" width="1" height="3" fill="#fff"/><rect x="42" y="383" width="1" height="3" fill="#fff"/><rect x="61" y="379" width="1" height="7" fill="#fff"/><rect x="79" y="383" width="1" height="3" fill="#fff"/><rect x="98" y="383" width="1" height="3" fill="#fff"/><rect x="116" y="383" width="1" height="3" fill="#fff"/><rect x="135" y="383" width="1" height="3" fill="#fff"/><rect x="153" y="380" width="1" height="6" fill="#fff"/><rect x="172" y="383" width="1" height="3" fill="#fff"/><rect x="190" y="383" width="1" height="3" fill="#fff"/><rect x="209" y="383" width="1" height="3" fill="#fff"/><rect x="228" y="383" width="1" height="3" fill="#fff"/><rect x="246" y="379" width="1" height="7" fill="#fff"/><rect x="265" y="383" width="1" height="3" fill="#fff"/><rect x="283" y="383" width="1" height="3" fill="#fff"/><rect x="302" y="383" width="1" height="3" fill="#fff"/><rect x="320" y="383" width="1" height="3" fill="#fff"/><rect x="339" y="380" width="1" height="6" fill="#fff"/><rect x="358" y="383" width="1" height="3" fill="#fff"/><rect x="376" y="383" width="1" height="3" fill="#fff"/><rect x="395" y="383" width="1" height="3" fill="#fff"/><rect x="413" y="383" width="1" height="3" fill="#fff"/><rect x="432" y="379" width="1" height="7" fill="#fff"/><rect x="450" y="383" width="1" height="3" fill="#fff"/><rect x="469" y="383" width="1" height="3" fill="#fff"/><rect x="488" y="383" width="1" height="3" fill="#fff"/><rect x="506" y="383" width="1" height="3" fill="#fff"/><rect x="525" y="380" width="1" height="6" fill="#fff"/><rect x="543" y="383" width="1" height="3" fill="#fff"/><rect x="562" y="383" width="1" height="3" fill="#fff"/><rect x="580" y="383" width="1" height="3" fill="#fff"/><rect x="599" y="383" width="1" height="3" fill="#fff"/><rect x="618" y="379" width="1" height="7" fill="#fff"/><rect x="636" y="383" width="1" height="3" fill="#fff"/><rect x="655" y="383" width="1" height="3" fill="#fff"/><rect x="673" y="383" width="1" height="3" fill="#fff"/><rect x="692" y="383" width="1" height="3" fill="#fff"/><rect x="710" y="380" width="1" height="6" fill="#fff"/><rect x="729" y="383" width="1" height="3" fill="#fff"/><rect x="748" y="383" width="1" height="3" fill="#fff"/><rect x="766" y="383" width="1" height="3" fill="#fff"/><rect x="785" y="383" width="1" height="3" fill="#fff"/><rect x="803" y="379" width="1" height="7" fill="#fff"/></svg>
<div class="t " style="left:46.50px;top:367.32px;font-size:11.5px;line-height:14px;color:#fff;transform:scaleX(0.9389);transform-origin:0 0;">21078</div>
<div class="t " style="left:232.20px;top:367.32px;font-size:11.5px;line-height:14px;color:#fff;transform:scaleX(0.9389);transform-origin:0 0;">21079</div>
<div class="t " style="left:417.90px;top:367.32px;font-size:11.5px;line-height:14px;color:#fff;transform:scaleX(0.9389);transform-origin:0 0;">21080</div>
<div class="t " style="left:603.60px;top:367.32px;font-size:11.5px;line-height:14px;color:#fff;transform:scaleX(0.9389);transform-origin:0 0;">21081</div>
<div class="t " style="left:789.30px;top:367.32px;font-size:11.5px;line-height:14px;color:#fff;transform:scaleX(0.9389);transform-origin:0 0;">21082</div>
<svg class="abs" style="left:4px;top:387px" width="803" height="39" viewBox="0 0 803 39"><defs><filter id="nz" x="0" y="0" width="100%" height="100%"><feTurbulence type="fractalNoise" baseFrequency="0.6 0.33" numOctaves="1" seed="3"/><feColorMatrix type="matrix" values="0 0 0 0 0.14  0 0 0 0 0.42  0 0 0 0 0.93  3 3 0 0 -2.9"/></filter><linearGradient id="dk" x1="0" x2="1" y1="0" y2="0"><stop offset="0" stop-color="#0a1cae" stop-opacity="0"/><stop offset="0.12" stop-color="#0a1cae" stop-opacity="0.1"/><stop offset="0.25" stop-color="#0a1cae" stop-opacity="0.5"/><stop offset="1" stop-color="#0a1cae" stop-opacity="0.55"/></linearGradient><linearGradient id="bgg" x1="0" x2="1" y1="0" y2="0"><stop offset="0" stop-color="#1650d4"/><stop offset="0.1" stop-color="#103cc4"/><stop offset="0.2" stop-color="#0c2cb8"/><stop offset="0.35" stop-color="#0a1cae"/><stop offset="1" stop-color="#0a1cb0"/></linearGradient><filter id="nd" x="0" y="0" width="100%" height="100%"><feTurbulence type="fractalNoise" baseFrequency="0.45 0.3" numOctaves="2" seed="11"/><feColorMatrix type="matrix" values="0 0 0 0 0.02  0 0 0 0 0.08  0 0 0 0 0.55  0 1.6 1.6 0 -1.3"/></filter></defs><rect x="0" y="0" width="803" height="39" fill="url(#bgg)"/><rect x="0" y="0" width="803" height="39" filter="url(#nz)"/><rect x="0" y="0" width="803" height="39" fill="url(#dk)"/><rect x="19.2" y="0" width="3" height="39" fill="#5ce8f2" opacity="1"/><rect x="28.5" y="0" width="3" height="39" fill="#48c4f6" opacity="0.95"/><rect x="38.0" y="0" width="2.6" height="39" fill="#2a7ce6" opacity="0.85"/><rect x="47.2" y="0" width="2.8" height="39" fill="#38a4f2" opacity="0.9"/><rect x="56.3" y="0" width="3" height="39" fill="#d4f8fa" opacity="1"/><rect x="65.6" y="0" width="3" height="39" fill="#48c4f6" opacity="0.95"/><rect x="75.1" y="0" width="2.6" height="39" fill="#2a7ce6" opacity="0.85"/><rect x="84.2" y="0" width="3" height="39" fill="#5ce8f2" opacity="1"/><rect x="93.6" y="0" width="2.8" height="39" fill="#38a4f2" opacity="0.9"/><rect x="102.9" y="0" width="2.8" height="39" fill="#38a4f2" opacity="0.9"/><rect x="112.0" y="0" width="3" height="39" fill="#5ce8f2" opacity="1"/><rect x="121.4" y="0" width="2.8" height="39" fill="#38a4f2" opacity="0.9"/><rect x="130.8" y="0" width="2.6" height="39" fill="#2a7ce6" opacity="0.85"/><rect x="139.9" y="0" width="3" height="39" fill="#5ce8f2" opacity="1"/><rect x="149.3" y="0" width="2.8" height="39" fill="#38a4f2" opacity="0.9"/><rect x="158.5" y="0" width="3" height="39" fill="#5ce8f2" opacity="1"/><rect x="168.0" y="0" width="2.6" height="39" fill="#2a7ce6" opacity="0.85"/><rect x="177.1" y="0" width="2.8" height="39" fill="#38a4f2" opacity="0.9"/><rect x="186.4" y="0" width="2.8" height="39" fill="#38a4f2" opacity="0.9"/><rect x="195.6" y="0" width="3" height="39" fill="#48c4f6" opacity="0.95"/><rect x="205.1" y="0" width="2.6" height="39" fill="#2a7ce6" opacity="0.85"/><rect x="214.4" y="0" width="2.6" height="39" fill="#2a7ce6" opacity="0.85"/><rect x="223.6" y="0" width="2.8" height="39" fill="#38a4f2" opacity="0.9"/><rect x="233.1" y="0" width="2.4" height="39" fill="#1c58d4" opacity="0.75"/><rect x="242.0" y="0" width="3" height="39" fill="#5ce8f2" opacity="1"/><rect x="251.5" y="0" width="2.6" height="39" fill="#2a7ce6" opacity="0.85"/><rect x="261.1" y="0" width="2" height="39" fill="#2468e8" opacity="0.9"/><rect x="265.8" y="0" width="2" height="39" fill="#1c58e0" opacity="0.85"/><rect x="270.4" y="0" width="2" height="39" fill="#2c7cf2" opacity="0.95"/><rect x="275.0" y="0" width="2" height="39" fill="#2468e8" opacity="0.9"/><rect x="279.7" y="0" width="2" height="39" fill="#2c7cf2" opacity="0.95"/><rect x="284.3" y="0" width="2" height="39" fill="#1440c8" opacity="0.8"/><rect x="289.0" y="0" width="2" height="39" fill="#2c7cf2" opacity="0.95"/><rect x="293.6" y="0" width="2" height="39" fill="#1c58e0" opacity="0.85"/><rect x="298.2" y="0" width="2" height="39" fill="#2c7cf2" opacity="0.95"/><rect x="302.9" y="0" width="2" height="39" fill="#2468e8" opacity="0.9"/><rect x="307.5" y="0" width="2" height="39" fill="#2c7cf2" opacity="0.95"/><rect x="312.2" y="0" width="2" height="39" fill="#1c58e0" opacity="0.85"/><rect x="316.8" y="0" width="2" height="39" fill="#2c7cf2" opacity="0.95"/><rect x="321.5" y="0" width="2" height="39" fill="#1c58e0" opacity="0.85"/><rect x="326.1" y="0" width="2" height="39" fill="#2c7cf2" opacity="0.95"/><rect x="330.7" y="0" width="2" height="39" fill="#2468e8" opacity="0.9"/><rect x="335.4" y="0" width="2" height="39" fill="#2c7cf2" opacity="0.95"/><rect x="340.0" y="0" width="2" height="39" fill="#1c58e0" opacity="0.85"/><rect x="344.7" y="0" width="2" height="39" fill="#2c7cf2" opacity="0.95"/><rect x="349.3" y="0" width="2" height="39" fill="#1c58e0" opacity="0.85"/><rect x="354.0" y="0" width="2" height="39" fill="#38a0f4" opacity="0.95"/><rect x="358.6" y="0" width="2" height="39" fill="#1c58e0" opacity="0.85"/><rect x="363.2" y="0" width="2" height="39" fill="#38a0f4" opacity="0.95"/><rect x="367.9" y="0" width="2" height="39" fill="#1c58e0" opacity="0.85"/><rect x="372.5" y="0" width="2" height="39" fill="#2468e8" opacity="0.9"/><rect x="377.2" y="0" width="2" height="39" fill="#2468e8" opacity="0.9"/><rect x="381.8" y="0" width="2" height="39" fill="#2468e8" opacity="0.9"/><rect x="386.5" y="0" width="2" height="39" fill="#1c58e0" opacity="0.85"/><rect x="391.1" y="0" width="2" height="39" fill="#2c7cf2" opacity="0.95"/><rect x="395.7" y="0" width="2" height="39" fill="#1c58e0" opacity="0.85"/><rect x="400.4" y="0" width="2" height="39" fill="#2468e8" opacity="0.9"/><rect x="405.0" y="0" width="2" height="39" fill="#1c58e0" opacity="0.85"/><rect x="409.7" y="0" width="2" height="39" fill="#2c7cf2" opacity="0.95"/><rect x="414.3" y="0" width="2" height="39" fill="#1c58e0" opacity="0.85"/><rect x="419.0" y="0" width="2" height="39" fill="#2468e8" opacity="0.9"/><rect x="423.6" y="0" width="2" height="39" fill="#1c58e0" opacity="0.85"/><rect x="428.2" y="0" width="2" height="39" fill="#2468e8" opacity="0.9"/><rect x="432.9" y="0" width="2" height="39" fill="#1c58e0" opacity="0.85"/><rect x="437.5" y="0" width="2" height="39" fill="#2468e8" opacity="0.9"/><rect x="442.2" y="0" width="2" height="39" fill="#2468e8" opacity="0.9"/><rect x="446.8" y="0" width="2" height="39" fill="#2c7cf2" opacity="0.95"/><rect x="451.5" y="0" width="2" height="39" fill="#2468e8" opacity="0.9"/><rect x="456.1" y="0" width="2" height="39" fill="#2468e8" opacity="0.9"/><rect x="460.7" y="0" width="2" height="39" fill="#1c58e0" opacity="0.85"/><rect x="465.4" y="0" width="2" height="39" fill="#38a0f4" opacity="0.95"/><rect x="470.0" y="0" width="2" height="39" fill="#1c58e0" opacity="0.85"/><rect x="474.7" y="0" width="2" height="39" fill="#2468e8" opacity="0.9"/><rect x="479.3" y="0" width="2" height="39" fill="#1c58e0" opacity="0.85"/><rect x="483.9" y="0" width="2" height="39" fill="#2c7cf2" opacity="0.95"/><rect x="488.6" y="0" width="2" height="39" fill="#1c58e0" opacity="0.85"/><rect x="493.2" y="0" width="2" height="39" fill="#2468e8" opacity="0.9"/><rect x="497.9" y="0" width="2" height="39" fill="#1c58e0" opacity="0.85"/><rect x="502.5" y="0" width="2" height="39" fill="#38a0f4" opacity="0.95"/><rect x="507.2" y="0" width="2" height="39" fill="#1c58e0" opacity="0.85"/><rect x="511.8" y="0" width="2" height="39" fill="#2c7cf2" opacity="0.95"/><rect x="516.4" y="0" width="2" height="39" fill="#1c58e0" opacity="0.85"/><rect x="521.1" y="0" width="2" height="39" fill="#2c7cf2" opacity="0.95"/><rect x="525.7" y="0" width="2" height="39" fill="#1c58e0" opacity="0.85"/><rect x="530.4" y="0" width="2" height="39" fill="#2c7cf2" opacity="0.95"/><rect x="535.0" y="0" width="2" height="39" fill="#1c58e0" opacity="0.85"/><rect x="539.7" y="0" width="2" height="39" fill="#2468e8" opacity="0.9"/><rect x="544.3" y="0" width="2" height="39" fill="#1440c8" opacity="0.8"/><rect x="548.9" y="0" width="2" height="39" fill="#2468e8" opacity="0.9"/><rect x="553.6" y="0" width="2" height="39" fill="#1c58e0" opacity="0.85"/><rect x="558.2" y="0" width="2" height="39" fill="#2c7cf2" opacity="0.95"/><rect x="562.9" y="0" width="2" height="39" fill="#1c58e0" opacity="0.85"/><rect x="567.5" y="0" width="2" height="39" fill="#2c7cf2" opacity="0.95"/><rect x="572.2" y="0" width="2" height="39" fill="#2468e8" opacity="0.9"/><rect x="576.8" y="0" width="2" height="39" fill="#2c7cf2" opacity="0.95"/><rect x="581.4" y="0" width="2" height="39" fill="#2468e8" opacity="0.9"/><rect x="586.1" y="0" width="2" height="39" fill="#2c7cf2" opacity="0.95"/><rect x="590.7" y="0" width="2" height="39" fill="#1c58e0" opacity="0.85"/><rect x="595.4" y="0" width="2" height="39" fill="#2c7cf2" opacity="0.95"/><rect x="600.0" y="0" width="2" height="39" fill="#1c58e0" opacity="0.85"/><rect x="604.7" y="0" width="2" height="39" fill="#2468e8" opacity="0.9"/><rect x="609.3" y="0" width="2" height="39" fill="#1c58e0" opacity="0.85"/><rect x="613.9" y="0" width="2" height="39" fill="#2c7cf2" opacity="0.95"/><rect x="618.6" y="0" width="2" height="39" fill="#1440c8" opacity="0.8"/><rect x="623.2" y="0" width="2" height="39" fill="#38a0f4" opacity="0.95"/><rect x="627.9" y="0" width="2" height="39" fill="#2468e8" opacity="0.9"/><rect x="632.5" y="0" width="2" height="39" fill="#2468e8" opacity="0.9"/><rect x="637.2" y="0" width="2" height="39" fill="#1c58e0" opacity="0.85"/><rect x="641.8" y="0" width="2" height="39" fill="#2468e8" opacity="0.9"/><rect x="646.4" y="0" width="2" height="39" fill="#1440c8" opacity="0.8"/><rect x="651.1" y="0" width="2" height="39" fill="#2468e8" opacity="0.9"/><rect x="655.7" y="0" width="2" height="39" fill="#1c58e0" opacity="0.85"/><rect x="660.4" y="0" width="2" height="39" fill="#2c7cf2" opacity="0.95"/><rect x="665.0" y="0" width="2" height="39" fill="#1c58e0" opacity="0.85"/><rect x="669.7" y="0" width="2" height="39" fill="#2c7cf2" opacity="0.95"/><rect x="674.3" y="0" width="2" height="39" fill="#1c58e0" opacity="0.85"/><rect x="678.9" y="0" width="2" height="39" fill="#2c7cf2" opacity="0.95"/><rect x="683.6" y="0" width="2" height="39" fill="#1440c8" opacity="0.8"/><rect x="688.2" y="0" width="2" height="39" fill="#2c7cf2" opacity="0.95"/><rect x="692.9" y="0" width="2" height="39" fill="#1c58e0" opacity="0.85"/><rect x="697.5" y="0" width="2" height="39" fill="#2468e8" opacity="0.9"/><rect x="702.1" y="0" width="2" height="39" fill="#1c58e0" opacity="0.85"/><rect x="706.8" y="0" width="2" height="39" fill="#2468e8" opacity="0.9"/><rect x="711.4" y="0" width="2" height="39" fill="#1c58e0" opacity="0.85"/><rect x="716.1" y="0" width="2" height="39" fill="#38a0f4" opacity="0.95"/><rect x="720.7" y="0" width="2" height="39" fill="#2468e8" opacity="0.9"/><rect x="725.4" y="0" width="2" height="39" fill="#2c7cf2" opacity="0.95"/><rect x="730.0" y="0" width="2" height="39" fill="#1c58e0" opacity="0.85"/><rect x="734.6" y="0" width="2" height="39" fill="#2c7cf2" opacity="0.95"/><rect x="739.3" y="0" width="2" height="39" fill="#2468e8" opacity="0.9"/><rect x="743.9" y="0" width="2" height="39" fill="#38a0f4" opacity="0.95"/><rect x="748.6" y="0" width="2" height="39" fill="#2468e8" opacity="0.9"/><rect x="753.2" y="0" width="2" height="39" fill="#2c7cf2" opacity="0.95"/><rect x="757.9" y="0" width="2" height="39" fill="#1c58e0" opacity="0.85"/><rect x="762.5" y="0" width="2" height="39" fill="#2c7cf2" opacity="0.95"/><rect x="767.1" y="0" width="2" height="39" fill="#1440c8" opacity="0.8"/><rect x="771.8" y="0" width="2" height="39" fill="#2c7cf2" opacity="0.95"/><rect x="776.4" y="0" width="2" height="39" fill="#1c58e0" opacity="0.85"/><rect x="781.1" y="0" width="2" height="39" fill="#2c7cf2" opacity="0.95"/><rect x="785.7" y="0" width="2" height="39" fill="#2468e8" opacity="0.9"/><rect x="790.4" y="0" width="2" height="39" fill="#2468e8" opacity="0.9"/><rect x="795.0" y="0" width="2" height="39" fill="#1c58e0" opacity="0.85"/><rect x="799.6" y="0" width="2" height="39" fill="#2468e8" opacity="0.9"/><rect x="453.7" y="0" width="2" height="39" fill="#38a0f0" opacity=".9"/><rect x="460.8" y="0" width="2" height="39" fill="#38a0f0" opacity=".9"/><rect x="556.8" y="0" width="2" height="39" fill="#38a0f0" opacity=".9"/><rect x="2" y="0" width="7" height="39" fill="#2890e8" opacity=".8"/><rect x="7.8" y="0" width="1" height="39" fill="#40d0a0" opacity=".8"/><rect x="12.5" y="0" width="1" height="39" fill="#40d0a0" opacity=".8"/><rect x="2" y="27" width="45" height="1" fill="#90ecf4" opacity=".8"/><rect x="47" y="27" width="78" height="1" fill="#70d0f0" opacity=".4"/><rect x="0" y="0" width="803" height="39" filter="url(#nd)" opacity=".4"/><rect x="8.6" y="0" width="4" height="39" fill="#8cf024"/><rect x="8.6" y="0" width="4" height="39" filter="url(#nd)" opacity=".15"/><rect x="0" y="0" width="1.5" height="39" fill="#000"/></svg>
<div style="position:absolute;left:4px;top:426px;width:803px;height:20px;background:#ECE9D8;"></div>
<div style="position:absolute;left:412px;top:430px;width:56px;height:15px;box-shadow:inset 1px 1px 0 #aca899, inset -1px -1px 0 #fff;"></div>
<div class="t " style="left:439.00px;top:430.89px;font-size:11px;line-height:14px;color:#000;transform:scaleX(0.9624);transform-origin:0 0;">Фикс</div>
<div style="position:absolute;left:471px;top:430px;width:18px;height:15px;box-shadow:inset 1px 1px 0 #aca899, inset -1px -1px 0 #fff;"></div>
<div class="t " style="left:474.30px;top:430.89px;font-size:11px;line-height:14px;color:#000;transform:scaleX(0.8445);transform-origin:0 0;">БН</div>
<div style="position:absolute;left:493px;top:430px;width:54px;height:15px;box-shadow:inset 1px 1px 0 #aca899, inset -1px -1px 0 #fff;"></div>
<div class="t " style="left:495.80px;top:430.89px;font-size:11px;line-height:14px;color:#000;letter-spacing:-0.211px;">2274,3 Hz</div>
<div style="position:absolute;left:550px;top:430px;width:63px;height:15px;box-shadow:inset 1px 1px 0 #aca899, inset -1px -1px 0 #fff;"></div>
<div class="t " style="left:553.40px;top:430.89px;font-size:11px;line-height:14px;color:#000;transform:scaleX(0.8312);transform-origin:0 0;">IMD:</div>
<div style="position:absolute;left:615px;top:430px;width:40px;height:15px;box-shadow:inset 1px 1px 0 #aca899, inset -1px -1px 0 #fff;"></div>
<div class="t " style="left:617.50px;top:430.89px;font-size:11px;line-height:14px;color:#000;transform:scaleX(0.8649);transform-origin:0 0;">BPSK63</div>
<div style="position:absolute;left:659px;top:430px;width:64px;height:15px;box-shadow:inset 1px 1px 0 #aca899, inset -1px -1px 0 #fff;"></div>
<div class="t " style="left:662.80px;top:430.89px;font-size:11px;line-height:14px;color:#000;letter-spacing:-0.035px;">28.03.2011</div>
<div style="position:absolute;left:727px;top:430px;width:61px;height:15px;box-shadow:inset 1px 1px 0 #aca899, inset -1px -1px 0 #fff;"></div>
<div class="t " style="left:729.60px;top:430.89px;font-size:11px;line-height:14px;color:#000;letter-spacing:-0.049px;">16:59:02 z</div>
<svg class="abs" style="left:792px;top:431px" width="14" height="14"><path d="M13 1 L1 13 M13 5 L5 13 M13 9 L9 13" stroke="#aca899" stroke-width="1.5"/><path d="M13 2 L2 13 M13 6 L6 13 M13 10 L10 13" stroke="#fff" stroke-width="1" transform="translate(1,1)"/></svg>
<div style="position:absolute;left:266px;top:50px;width:180px;height:410px;background:#fff;border:1px solid #aca899;box-sizing:border-box;box-shadow:1px 1px 1px rgba(0,0,0,.35);"></div>
<div class="t " style="left:284.70px;top:54.19px;font-size:11px;line-height:14px;color:#000;letter-spacing:-0.007px;">Панель функц. клавиш</div>
<svg class="abs" style="left:272px;top:58px" width="8" height="8" viewBox="0 0 8 8"><path d="M0.7 3.2 L2.8 5.6 L7 1" fill="none" stroke="#000" stroke-width="2"/></svg>
<div class="t " style="left:284.70px;top:71.19px;font-size:11px;line-height:14px;color:#000;letter-spacing:-0.048px;">Журнал связей</div>
<svg class="abs" style="left:434px;top:74px" width="5" height="8" viewBox="0 0 5 8"><path d="M0.5 0.5 L4.5 4 L0.5 7.5 Z" fill="#000"/></svg>
<div class="t " style="left:284.70px;top:88.19px;font-size:11px;line-height:14px;color:#000;letter-spacing:-0.018px;">Панель частоты (CAT)</div>
<svg class="abs" style="left:272px;top:92px" width="8" height="8" viewBox="0 0 8 8"><path d="M0.7 3.2 L2.8 5.6 L7 1" fill="none" stroke="#000" stroke-width="2"/></svg>
<div class="t " style="left:284.70px;top:105.19px;font-size:11px;line-height:14px;color:#000;letter-spacing:0.123px;">Индикатор настройки</div>
<div class="t " style="left:284.70px;top:122.19px;font-size:11px;line-height:14px;color:#000;letter-spacing:0.034px;">Азимутальная карта</div>
<div class="t " style="left:284.70px;top:139.19px;font-size:11px;line-height:14px;color:#000;letter-spacing:-0.090px;">Окно DX-кластера</div>
<div class="t " style="left:284.70px;top:156.19px;font-size:11px;line-height:14px;color:#aca899;letter-spacing:-0.005px;">Окно справочника</div>
<div class="t " style="left:284.70px;top:173.19px;font-size:11px;line-height:14px;color:#000;letter-spacing:-0.011px;">Строка состояния</div>
<svg class="abs" style="left:272px;top:177px" width="8" height="8" viewBox="0 0 8 8"><path d="M0.7 3.2 L2.8 5.6 L7 1" fill="none" stroke="#000" stroke-width="2"/></svg>
<div class="t " style="left:284.70px;top:190.19px;font-size:11px;line-height:14px;color:#000;letter-spacing:0.217px;">Статистика</div>
<svg class="abs" style="left:434px;top:193px" width="5" height="8" viewBox="0 0 5 8"><path d="M0.5 0.5 L4.5 4 L0.5 7.5 Z" fill="#000"/></svg>
<div class="t " style="left:284.70px;top:207.19px;font-size:11px;line-height:14px;color:#000;letter-spacing:-0.085px;">Быстрый поиск</div>
<svg class="abs" style="left:434px;top:210px" width="5" height="8" viewBox="0 0 5 8"><path d="M0.5 0.5 L4.5 4 L0.5 7.5 Z" fill="#000"/></svg>
<div class="t " style="left:284.70px;top:224.19px;font-size:11px;line-height:14px;color:#000;transform:scaleX(0.9426);transform-origin:0 0;">NCDXF/IARU Маяки</div>
<div class="t " style="left:284.70px;top:241.19px;font-size:11px;line-height:14px;color:#000;letter-spacing:-0.188px;">Сканер</div>
<div style="position:absolute;left:268px;top:266px;width:176px;height:17px;background:#316ac5;"></div>
<div class="t " style="left:284.70px;top:267.19px;font-size:11px;line-height:14px;color:#fff;letter-spacing:-0.101px;">Режим соревнований...</div>
<div class="t " style="left:284.70px;top:284.19px;font-size:11px;line-height:14px;color:#000;letter-spacing:0.097px;">Окно спектра</div>
<svg class="abs" style="left:434px;top:287px" width="5" height="8" viewBox="0 0 5 8"><path d="M0.5 0.5 L4.5 4 L0.5 7.5 Z" fill="#000"/></svg>
<div class="t " style="left:284.70px;top:310.19px;font-size:11px;line-height:14px;color:#000;letter-spacing:0.107px;">Подчеркивать переданное</div>
<svg class="abs" style="left:272px;top:314px" width="8" height="8" viewBox="0 0 8 8"><path d="M0.7 3.2 L2.8 5.6 L7 1" fill="none" stroke="#000" stroke-width="2"/></svg>
<div class="t " style="left:284.70px;top:327.19px;font-size:11px;line-height:14px;color:#000;letter-spacing:-0.079px;">Режим &quot;передачи слова&quot;</div>
<div class="t " style="left:284.70px;top:344.19px;font-size:11px;line-height:14px;color:#000;transform:scaleX(0.9223);transform-origin:0 0;">ТОЛЬКО ЗАГЛАВНЫМИ</div>
<div class="t " style="left:284.70px;top:361.19px;font-size:11px;line-height:14px;color:#000;letter-spacing:0.043px;">Перечеркнутый ноль</div>
<div class="t " style="left:284.70px;top:378.19px;font-size:11px;line-height:14px;color:#000;transform:scaleX(0.8900);transform-origin:0 0;">Время UTC</div>
<svg class="abs" style="left:272px;top:382px" width="8" height="8" viewBox="0 0 8 8"><path d="M0.7 3.2 L2.8 5.6 L7 1" fill="none" stroke="#000" stroke-width="2"/></svg>
<div class="t " style="left:284.70px;top:395.19px;font-size:11px;line-height:14px;color:#000;letter-spacing:-0.283px;">Мигающий 'TX'</div>
<svg class="abs" style="left:272px;top:399px" width="8" height="8" viewBox="0 0 8 8"><path d="M0.7 3.2 L2.8 5.6 L7 1" fill="none" stroke="#000" stroke-width="2"/></svg>
<div class="t " style="left:284.70px;top:412.19px;font-size:11px;line-height:14px;color:#000;letter-spacing:-0.061px;">Курсор-линия</div>
<div class="t " style="left:284.70px;top:429.19px;font-size:11px;line-height:14px;color:#000;letter-spacing:0.019px;">Доп. линии настройки</div>
<div class="t " style="left:284.70px;top:446.19px;font-size:11px;line-height:14px;color:#000;letter-spacing:-0.038px;">Всегда показывать IMD</div>
<div style="position:absolute;left:268px;top:260px;width:176px;height:1px;background:#aca899;"></div>
<div style="position:absolute;left:268px;top:303px;width:176px;height:1px;background:#aca899;"></div>
</div></body></html>
